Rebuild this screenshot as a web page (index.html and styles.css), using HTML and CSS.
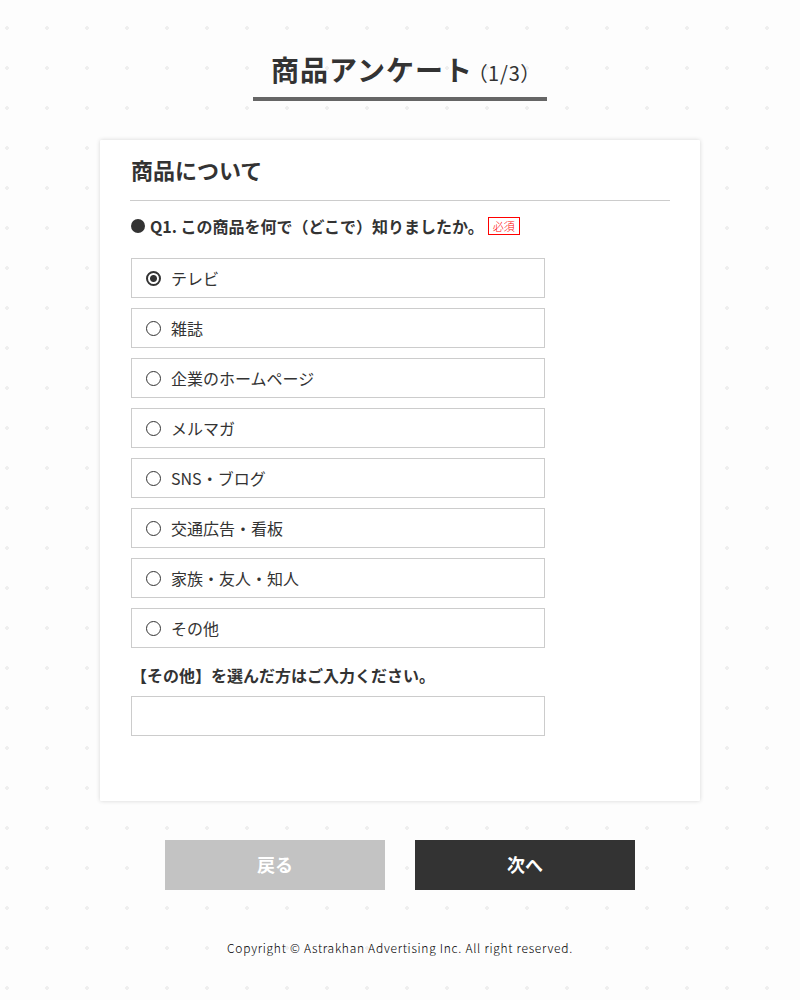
FILE: index.html
```html
<!DOCTYPE html>
<html lang="ja">
<head>
<meta charset="utf-8">
<meta name="viewport" content="width=device-width, initial-scale=1">
<title>商品アンケート</title>
<link rel="stylesheet" href="styles.css">
</head>
<body>
<header class="page-header">
  <h1 class="page-title">商品アンケート<span class="page-step">（1/3）</span></h1>
</header>
<form class="survey">
  <main class="card">
    <h2 class="card-title">商品について</h2>
    <fieldset class="question">
      <legend class="question-title"><span class="bullet"></span><span>Q1. この商品を何で（どこで）知りましたか。</span><span class="required">必須</span></legend>
      <div class="options">
        <label class="option"><input class="radio" type="radio" name="q1" checked>テレビ</label>
        <label class="option"><input class="radio" type="radio" name="q1">雑誌</label>
        <label class="option"><input class="radio" type="radio" name="q1">企業のホームページ</label>
        <label class="option"><input class="radio" type="radio" name="q1">メルマガ</label>
        <label class="option"><input class="radio" type="radio" name="q1">SNS・ブログ</label>
        <label class="option"><input class="radio" type="radio" name="q1">交通広告・看板</label>
        <label class="option"><input class="radio" type="radio" name="q1">家族・友人・知人</label>
        <label class="option"><input class="radio" type="radio" name="q1">その他</label>
      </div>
      <label class="other-label" for="other">【その他】を選んだ方はご入力ください。</label>
      <input class="other-input" type="text" id="other" name="other">
    </fieldset>
  </main>
  <div class="actions">
    <button class="button button-back" type="button">戻る</button>
    <button class="button button-next" type="submit">次へ</button>
  </div>
</form>
<footer class="page-footer">Copyright © Astrakhan Advertising Inc. All right reserved.</footer>
</body>
</html>
```
FILE: styles.css
```css
* {
  box-sizing: border-box;
}

body {
  margin: 0;
  padding: 44px 20px 30px;
  background-color: #fdfdfd;
  background-image: radial-gradient(circle at 7px 28px, #efefef 2px, transparent 2px);
  background-size: 40px 40px;
  color: #333;
  font-family: "Noto Sans CJK JP", sans-serif;
  font-size: 16px;
  line-height: 24px;
}

.page-header {
  display: flex;
  justify-content: center;
}

.page-title {
  margin: 0;
  padding: 4px 15px 3px 18px;
  border-bottom: 4px solid #666;
  font-size: 28px;
  font-weight: 700;
  line-height: 42px;
  letter-spacing: 1px;
}

.page-step {
  margin-left: 4px;
  font-size: 20px;
  font-weight: 400;
  font-feature-settings: "palt";
}

.survey {
  max-width: 600px;
  margin: 39px auto 0;
}

.card {
  padding: 10px 30px 65px;
  background: #fff;
  border-radius: 1px;
  box-shadow: 0 0 4px rgba(0, 0, 0, 0.16);
}

.card-title {
  margin: 0;
  padding: 3px 1px 15px;
  border-bottom: 1px solid #ccc;
  font-size: 22px;
  font-weight: 700;
  line-height: 32px;
}

.question {
  min-width: 0;
  margin: 0;
  padding: 0 1px;
  border: 0;
}

.question-title {
  display: flex;
  align-items: center;
  gap: 4px;
  padding: 13px 0 20px;
  font-weight: 700;
}

.bullet {
  width: 14px;
  height: 14px;
  margin-right: 1px;
  border-radius: 50%;
  background: #333;
}

.required {
  padding: 0 4px;
  border: 1px solid #f00;
  color: #f00;
  font-size: 11px;
  font-weight: 300;
  line-height: 16px;
}

.options {
  display: grid;
  gap: 10px;
  max-width: 414px;
}

.option {
  display: flex;
  align-items: center;
  gap: 10px;
  height: 40px;
  padding: 0 14px;
  background: #fff;
  border: 1px solid #ccc;
}

.radio {
  appearance: none;
  flex: none;
  width: 15px;
  height: 15px;
  margin: 0;
  border: 1px solid #333;
  border-radius: 50%;
}

.radio:checked {
  border-width: 2px;
  background: radial-gradient(circle, #333 3px, transparent 4px);
}

.other-label {
  display: block;
  padding: 15px 0 9px;
  font-weight: 700;
}

.other-input {
  display: block;
  width: 100%;
  max-width: 414px;
  height: 40px;
  padding: 0 14px;
  border: 1px solid #ccc;
  background: #fff;
  font: inherit;
}

.actions {
  display: flex;
  justify-content: center;
  gap: 30px;
  margin-top: 39px;
}

.button {
  width: 220px;
  height: 50px;
  border: 0;
  padding: 0 0 3px;
  color: #fff;
  font: inherit;
  font-size: 18px;
  font-weight: 700;
}

.button-back {
  background: #c3c3c3;
}

.button-next {
  background: #333;
}

.page-footer {
  margin-top: 46px;
  color: #000;
  font-size: 12px;
  font-weight: 300;
  letter-spacing: 0.06em;
  text-align: center;
}
```
